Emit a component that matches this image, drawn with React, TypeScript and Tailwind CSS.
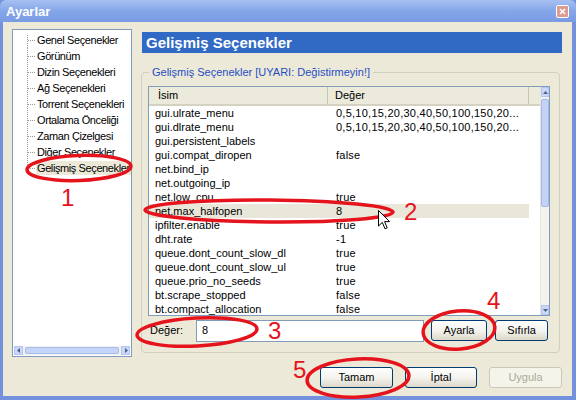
import React from "react";

const rows: [string, string][] = [
  ["gui.ulrate_menu", "0,5,10,15,20,30,40,50,100,150,20..."],
  ["gui.dlrate_menu", "0,5,10,15,20,30,40,50,100,150,20..."],
  ["gui.persistent_labels", ""],
  ["gui.compat_diropen", "false"],
  ["net.bind_ip", ""],
  ["net.outgoing_ip", ""],
  ["net.low_cpu", "true"],
  ["net.max_halfopen", "8"],
  ["ipfilter.enable", "true"],
  ["dht.rate", "-1"],
  ["queue.dont_count_slow_dl", "true"],
  ["queue.dont_count_slow_ul", "true"],
  ["queue.prio_no_seeds", "true"],
  ["bt.scrape_stopped", "false"],
  ["bt.compact_allocation", "false"],
];

const treeItems = [
  "Genel Seçenekler",
  "Görünüm",
  "Dizin Seçenekleri",
  "Ağ Seçenekleri",
  "Torrent Seçenekleri",
  "Ortalama Önceliği",
  "Zaman Çizelgesi",
  "Diğer Seçenekler",
  "Gelişmiş Seçenekler",
];

function TreeConnector({ first, last }: { first: boolean; last: boolean }) {
  return (
    <svg width="24" height="16" className="shrink-0">
      <line
        x1="14.5"
        x2="14.5"
        y1={first ? 3 : 0}
        y2={last ? 8.5 : 16}
        stroke="#9a9a9a"
        strokeDasharray="1 1"
      />
      <line x1="15" x2="22" y1="8.5" y2="8.5" stroke="#9a9a9a" strokeDasharray="1 1" />
    </svg>
  );
}

function XPButton({ children, w, disabled }: { children: React.ReactNode; w: string; disabled?: boolean }) {
  return (
    <div
      className={
        disabled
          ? `${w} h-[21px] flex items-center justify-center rounded-[3px] border border-[#c9c7ba] bg-[#f5f4ea] text-[#aca899]`
          : `${w} h-[21px] flex items-center justify-center rounded-[3px] border border-[#003c74] bg-linear-to-b from-[#ffffff] via-[#f4f3ee] to-[#dcd8c9] text-black`
      }
    >
      {children}
    </div>
  );
}

export default function App() {
  return (
    <div className="relative w-[576px] h-[400px] overflow-hidden flex flex-col bg-[#7491de] font-['Liberation_Sans',Arial,sans-serif] text-[11px] text-black select-none">
      {/* Title bar */}
      <div className="h-[22px] shrink-0 flex items-center justify-between pl-[6px] pr-[7px] rounded-t-[6px] bg-linear-to-b from-[#a7c0f1] via-[#84a6e9] to-[#7a9be2]">
        <span className="text-white font-bold text-[13px] leading-none">Ayarlar</span>
        <div className="w-[13px] h-[13px] rounded-[2px] border border-white bg-[#dc9b90] flex items-center justify-center">
          <svg width="7" height="7" viewBox="0 0 7 7">
            <path d="M1 1 L6 6 M6 1 L1 6" stroke="white" strokeWidth="1.6" />
          </svg>
        </div>
      </div>

      {/* Body */}
      <div className="flex-1 ml-[3px] mr-[4px] mb-[4px] bg-[#ece9d8] flex flex-col">
        <div className="flex pl-[9px] pt-[7px]">
          {/* Left tree */}
          <div className="w-[120px] h-[328px] border border-[#7f9db9] bg-white flex flex-col overflow-hidden">
            <div className="flex-1 flex flex-col pt-[2px]">
              {treeItems.map((t, i) => (
                <div key={t} className="h-[16px] flex items-center">
                  <TreeConnector first={i === 0} last={i === treeItems.length - 1} />
                  <span
                    className={
                      i === treeItems.length - 1
                        ? "whitespace-nowrap leading-[14px] tracking-[-0.4px] bg-[#ece9d8] px-[1px] -ml-[1px]"
                        : "whitespace-nowrap leading-[14px] tracking-[-0.4px]"
                    }
                  >
                    {t}
                  </span>
                </div>
              ))}
            </div>
            {/* horizontal scrollbar */}
            <div className="h-[9px] mx-[1px] mb-[1px] flex items-stretch bg-[#f2f1ec]">
              <div className="w-[9px] bg-[#c8d7fa] border border-[#b3c5f2] flex items-center justify-center">
                <svg width="4" height="5"><path d="M3 0 L0 2.5 L3 5 Z" fill="#4d6185" /></svg>
              </div>
              <div className="flex-1 mx-[2px] my-[1px] rounded-[2px] bg-[#c5d5f9] border border-[#a9bce8]" />
              <div className="w-[9px] bg-[#c8d7fa] border border-[#b3c5f2] flex items-center justify-center">
                <svg width="4" height="5"><path d="M1 0 L4 2.5 L1 5 Z" fill="#4d6185" /></svg>
              </div>
            </div>
          </div>

          {/* Right column */}
          <div className="ml-[9px] w-[422px] flex flex-col">
            <div className="mt-[2px] h-[23px] bg-[#316ac5] border border-[#e9e7dc] flex items-center pl-[4px]">
              <span className="text-white font-bold text-[15px] leading-none">Gelişmiş Seçenekler</span>
            </div>

            <fieldset className="mt-[11px] w-[419px] border border-[#d0d0bf] rounded-[4px] pl-[6px] pb-[10px]">
              <legend className="ml-[1px] px-[3px] leading-[14px] text-[#1f4ec4]">
                Gelişmiş Seçenekler [UYARI: Değistirmeyin!]
              </legend>

              {/* List view */}
              <div className="mt-[7px] w-[402px] h-[230px] border border-[#7f9db9] bg-white flex overflow-hidden">
                <div className="flex-1 flex flex-col overflow-hidden">
                  <div className="h-[19px] shrink-0 flex bg-[#ebeadb] border-b-[2px] border-[#d6d2c2]">
                    <div className="w-[179px] flex items-center pl-[9px] border-r border-[#c7c5b2]">
                      İsim
                    </div>
                    <div className="w-[201px] flex items-center pl-[7px] border-r border-[#c7c5b2]">
                      Değer
                    </div>
                    <div className="flex-1" />
                  </div>
                  {rows.map(([k, v], i) => (
                    <div
                      key={k}
                      className={
                        i === 7
                          ? "h-[14px] shrink-0 flex w-[380px] bg-[#e9e6da] leading-[14px]"
                          : "h-[14px] shrink-0 flex w-[380px] leading-[14px]"
                      }
                    >
                      <div className="w-[179px] pl-[6px] whitespace-nowrap">{k}</div>
                      <div className="w-[201px] pl-[8px] whitespace-nowrap tracking-[0.25px]">{v}</div>
                    </div>
                  ))}
                </div>
                {/* vertical scrollbar */}
                <div className="w-[9px] flex flex-col bg-[#f3f2ed] border-l border-[#e8e6dc]">
                  <div className="h-[10px] bg-[#c8d7fa] border border-[#b3c5f2] flex items-center justify-center">
                    <svg width="5" height="3"><path d="M0 3 L2.5 0 L5 3 Z" fill="#4d6185" /></svg>
                  </div>
                  <div className="h-[108px] mt-[2px] rounded-[2px] bg-[#c3d3f8] border border-[#a6b9e6]" />
                  <div className="flex-1" />
                  <div className="h-[10px] bg-[#c8d7fa] border border-[#b3c5f2] flex items-center justify-center">
                    <svg width="5" height="3"><path d="M0 0 L2.5 3 L5 0 Z" fill="#4d6185" /></svg>
                  </div>
                </div>
              </div>

              {/* value row */}
              <div className="mt-[3px] h-[23px] flex items-center">
                <span className="ml-[2px] w-[46px]">Değer:</span>
                <div className="w-[228px] h-[22px] border border-[#7f9db9] bg-white flex items-center pl-[5px]">8</div>
                <div className="ml-[7px]">
                  <XPButton w="w-[56px]">Ayarla</XPButton>
                </div>
                <div className="ml-[8px]">
                  <XPButton w="w-[53px]">Sıfırla</XPButton>
                </div>
              </div>
            </fieldset>
          </div>
        </div>

        {/* bottom buttons */}
        <div className="mt-[10px] flex justify-end pr-[10px] gap-[12px]">
          <XPButton w="w-[73px]">Tamam</XPButton>
          <XPButton w="w-[72px]">İptal</XPButton>
          <XPButton w="w-[73px]" disabled>
            Uygula
          </XPButton>
        </div>
      </div>

      {/* Red annotations overlay */}
      <svg className="absolute inset-0 pointer-events-none" width="576" height="400">
        <g fill="none" stroke="#e5141c" strokeWidth="3.5">
          <ellipse cx="79" cy="168" rx="52" ry="12.5" transform="rotate(-2 79 168)" />
          <ellipse cx="269" cy="211" rx="124" ry="11" transform="rotate(0.5 269 211)" />
          <ellipse cx="197" cy="332" rx="60" ry="14" transform="rotate(-3 197 332)" />
          <ellipse cx="459" cy="330" rx="36" ry="19" transform="rotate(-5 459 330)" />
          <ellipse cx="358" cy="378" rx="51" ry="19" transform="rotate(-3 358 378)" />
        </g>
      </svg>
      <div className="absolute left-[61px] top-[186px] text-[24px] leading-none text-[#e5141c]">1</div>
      <div className="absolute left-[404px] top-[200px] text-[24px] leading-none text-[#e5141c]">2</div>
      <div className="absolute left-[268px] top-[319px] text-[24px] leading-none text-[#e5141c]">3</div>
      <div className="absolute left-[487px] top-[289px] text-[24px] leading-none text-[#e5141c]">4</div>
      <div className="absolute left-[293px] top-[358px] text-[24px] leading-none text-[#e5141c]">5</div>

      {/* mouse cursor */}
      <svg className="absolute left-[378px] top-[210px] pointer-events-none" width="13" height="21" viewBox="0 0 13 21">
        <path d="M0.5 0.5 L0.5 16 L4.3 12.4 L7 18.8 L9.2 17.9 L6.6 11.6 L11.6 11.6 Z" fill="white" stroke="black" strokeWidth="1" />
      </svg>
    </div>
  );
}
